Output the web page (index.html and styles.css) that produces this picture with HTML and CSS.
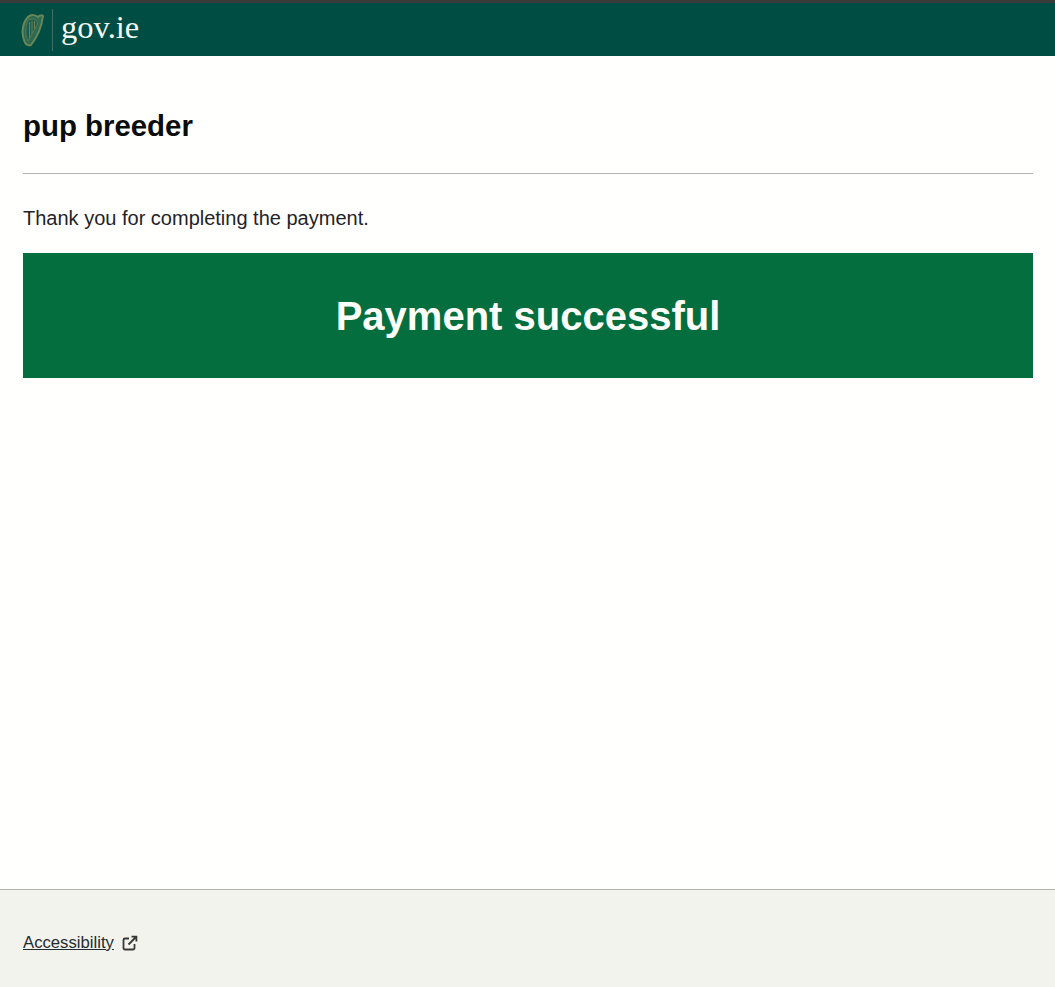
FILE: index.html
```html
<!DOCTYPE html>
<html lang="en">
<head>
    <meta charset="UTF-8">
    <title>Payment successful</title>
    <link rel="stylesheet" href="styles.css">
</head>
<body>
    <header class="site-header">
        <a class="logo" href="#">
            <svg class="harp" width="23" height="36" viewBox="0 0 23 36" fill="none">
                <!-- harp frame, soft olive like the reference -->
                <path d="M7 5 C10 2 15 3 17 5 C19 3 21 3 22 4 C21 12 17 24 10 33 C6 34 4 32 3 28 C0 20 2 10 7 5 Z" fill="#2e6a50" stroke="#6b8656" stroke-width="2"/>
                <path d="M7 8 C4 15 4 23 7 29 L16 13 C17 10 15 7 12 7 Z" fill="#1f5c4c" stroke="#56785a" stroke-width="1"/>
                <path d="M8.5 10 L8.5 26 M11 9 L11 22 M13.5 9 L13.5 17" stroke="#668259" stroke-width="1"/>
            </svg>
            <span class="logo-divider"></span>
            <span class="logo-text">gov.ie</span>
        </a>
    </header>

    <main class="content">
        <h1 class="service-name">pup breeder</h1>
        <hr class="divider">
        <p class="thanks">Thank you for completing the payment.</p>
        <div class="success-panel">
            <h2>Payment successful</h2>
        </div>
    </main>

    <footer class="site-footer">
        <a class="footer-link" href="#">Accessibility</a>
        <svg class="external" width="16" height="16" viewBox="0 0 16 16" fill="none" stroke="#383838" stroke-width="1.8">
            <path d="M12.5 9 V13 a1.5 1.5 0 0 1 -1.5 1.5 H3 a1.5 1.5 0 0 1 -1.5 -1.5 V5 A1.5 1.5 0 0 1 3 3.5 H7"/>
            <path d="M6.5 9.5 L14 2 M9.5 1.6 H14.4 V6.5"/>
        </svg>
    </footer>
</body>
</html>
```

FILE: styles.css
```css
* {
    box-sizing: border-box;
}
body {
    margin: 0;
    min-height: 987px;
    display: flex;
    flex-direction: column;
    font-family: 'Liberation Sans', Arial, sans-serif;
    background: #fffffd;
    color: #0b0c0c;
}
.site-header {
    height: 56px;
    padding-left: 21px;
    background: #004d44;
    border-top: 3px solid #3a3a3a;
    display: flex;
    align-items: center;
}
.logo {
    display: flex;
    align-items: center;
    text-decoration: none;
}
.logo-divider {
    width: 1px;
    height: 42px;
    margin: 0 8px 0 8px;
    background: #3f6f66;
}
.logo-text {
    font-family: 'Liberation Serif', 'Times New Roman', serif;
    font-size: 32.5px;
    color: #f4f8f5;
    line-height: 1;
    margin-top: -5px;
}
.content {
    flex: 1;
    padding: 0 22px 0 23px;
}
.service-name {
    margin: 52px 0 30px;
    font-size: 29.4px;
    line-height: 35px;
}
.divider {
    margin: 0;
    border: 0;
    border-top: 1px solid #b1b4b6;
}
.thanks {
    margin: 32px 0 22px;
    font-size: 20px;
    line-height: 25px;
    color: #1f2328;
}
.success-panel {
    height: 125px;
    padding-top: 1px;
    background: #056e3e;
    display: flex;
    align-items: center;
    justify-content: center;
}
.success-panel h2 {
    margin: 0;
    font-size: 40px;
    color: #fbfdf9;
}
.site-footer {
    height: 98px;
    padding: 8px 22px 0 23px;
    background: #f3f3ed;
    border-top: 1px solid #b5b5a8;
    display: flex;
    align-items: center;
    gap: 8px;
}
.footer-link {
    font-size: 16.7px;
    color: #1f2b33;
}
```
